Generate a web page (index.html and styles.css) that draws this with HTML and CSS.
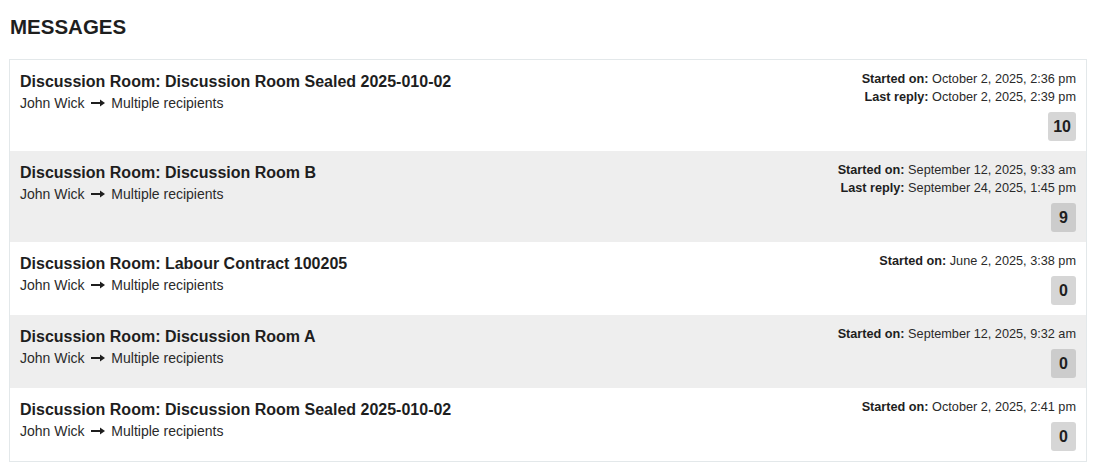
FILE: index.html
```html
<!DOCTYPE html>
<html>
<head>
<meta charset="utf-8">
<link rel="stylesheet" href="styles.css">
</head>
<body>
<h2 class="page-title">MESSAGES</h2>
<div class="thread-list">
  <div class="thread">
    <div class="thread-main">
      <div class="thread-title">Discussion Room: Discussion Room Sealed 2025-010-02</div>
      <div class="thread-sub">John Wick <svg class="arrow" width="14" height="8" viewBox="0 0 14 8"><rect x="0" y="3" width="10" height="2"/><polygon points="9,0.5 14,4 9,7.5"/></svg> Multiple recipients</div>
    </div>
    <div class="thread-meta">
      <div class="meta-line"><b>Started on:</b> October 2, 2025, 2:36 pm</div>
      <div class="meta-line"><b>Last reply:</b> October 2, 2025, 2:39 pm</div>
      <span class="badge">10</span>
    </div>
  </div>
  <div class="thread alt">
    <div class="thread-main">
      <div class="thread-title">Discussion Room: Discussion Room B</div>
      <div class="thread-sub">John Wick <svg class="arrow" width="14" height="8" viewBox="0 0 14 8"><rect x="0" y="3" width="10" height="2"/><polygon points="9,0.5 14,4 9,7.5"/></svg> Multiple recipients</div>
    </div>
    <div class="thread-meta">
      <div class="meta-line"><b>Started on:</b> September 12, 2025, 9:33 am</div>
      <div class="meta-line"><b>Last reply:</b> September 24, 2025, 1:45 pm</div>
      <span class="badge">9</span>
    </div>
  </div>
  <div class="thread">
    <div class="thread-main">
      <div class="thread-title">Discussion Room: Labour Contract 100205</div>
      <div class="thread-sub">John Wick <svg class="arrow" width="14" height="8" viewBox="0 0 14 8"><rect x="0" y="3" width="10" height="2"/><polygon points="9,0.5 14,4 9,7.5"/></svg> Multiple recipients</div>
    </div>
    <div class="thread-meta">
      <div class="meta-line"><b>Started on:</b> June 2, 2025, 3:38 pm</div>
      <span class="badge">0</span>
    </div>
  </div>
  <div class="thread alt">
    <div class="thread-main">
      <div class="thread-title">Discussion Room: Discussion Room A</div>
      <div class="thread-sub">John Wick <svg class="arrow" width="14" height="8" viewBox="0 0 14 8"><rect x="0" y="3" width="10" height="2"/><polygon points="9,0.5 14,4 9,7.5"/></svg> Multiple recipients</div>
    </div>
    <div class="thread-meta">
      <div class="meta-line"><b>Started on:</b> September 12, 2025, 9:32 am</div>
      <span class="badge">0</span>
    </div>
  </div>
  <div class="thread">
    <div class="thread-main">
      <div class="thread-title">Discussion Room: Discussion Room Sealed 2025-010-02</div>
      <div class="thread-sub">John Wick <svg class="arrow" width="14" height="8" viewBox="0 0 14 8"><rect x="0" y="3" width="10" height="2"/><polygon points="9,0.5 14,4 9,7.5"/></svg> Multiple recipients</div>
    </div>
    <div class="thread-meta">
      <div class="meta-line"><b>Started on:</b> October 2, 2025, 2:41 pm</div>
      <span class="badge">0</span>
    </div>
  </div>
</div>
</body>
</html>
```
FILE: styles.css
```css
html, body {
  margin: 0;
  padding: 0;
  background: #ffffff;
}
body {
  font-family: "Liberation Sans", Arial, sans-serif;
  color: #222222;
}
.page-title {
  margin: 0;
  padding: 14px 10px 0 10px;
  font-size: 20.5px;
  line-height: 26px;
  font-weight: bold;
  color: #1e1e1e;
}
.thread-list {
  margin: 19px 8px 0 9px;
  border: 1px solid #e3e8ea;
}
.thread {
  display: flex;
  justify-content: space-between;
  align-items: flex-start;
  padding: 10px;
  background: #ffffff;
}
.thread.alt {
  background: #eeeeee;
}
.thread-title {
  margin-top: 1px;
  font-size: 16px;
  font-weight: bold;
  line-height: 22px;
  color: #1e1e1e;
}
.thread-sub {
  margin-top: -1px;
  font-size: 14px;
  line-height: 22px;
  color: #2a2a2a;
}
.arrow {
  display: inline-block;
  margin: 0 2px 0 3px;
  vertical-align: 1px;
  fill: #1e1e1e;
}
.thread-meta {
  display: flex;
  flex-direction: column;
  align-items: flex-end;
  font-size: 12.7px;
  line-height: 18px;
  color: #2a2a2a;
}
.meta-line b {
  color: #1e1e1e;
}
.badge {
  margin-top: 6px;
  box-sizing: border-box;
  min-width: 25px;
  height: 29px;
  padding: 0 5px;
  line-height: 29px;
  text-align: center;
  font-size: 16px;
  font-weight: bold;
  color: #1e1e1e;
  background: #d6d6d6;
  border-radius: 3px;
}
.thread.alt .badge {
  background: #cccccc;
}
```
